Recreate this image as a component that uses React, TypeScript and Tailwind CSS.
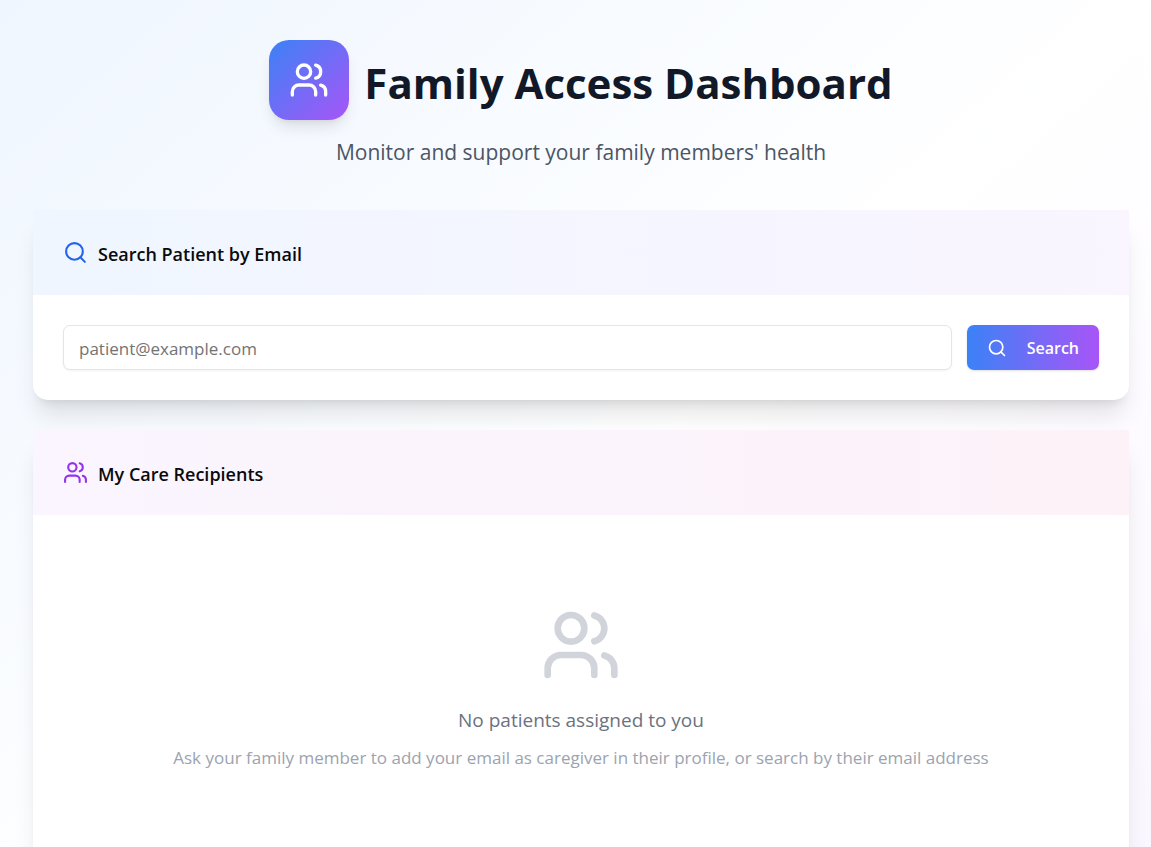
import {useState} from "react";
import {Search, Users} from "lucide-react";

const FamilyDashboard = () => {
  const [email, setEmail] = useState<string>("");

  const handleSubmit = (e: any) => {
    e.preventDefault();
  };

  return (
    <div className="min-h-screen bg-linear-to-br/srgb from-[#eff6ff] via-white to-[#faf5ff] pt-10 pr-[22px] pb-[160px] pl-[33px] font-['Segoe_UI','Open_Sans',sans-serif]">
      <header className="mb-10 text-center">
        <div className="flex items-start justify-center gap-[15px]">
          <div className="rounded-[20px] bg-linear-to-br/srgb from-[#3b82f6] to-[#a855f7] p-5 shadow-lg">
            <Users className="size-10 text-white" />
          </div>
          <h1 className="text-[42px] leading-[85px] font-bold text-[#111827]">
            Family Access Dashboard
          </h1>
        </div>
        <p className="mt-[10px] text-[21px] leading-[35px] text-[#4b5563]">
          Monitor and support your family members' health
        </p>
      </header>

      <main className="flex flex-col gap-[30px]">
        <section className="rounded-[15px] bg-white shadow-xl">
          <div className="bg-linear-to-r/srgb from-[#eff6ff] to-[#faf5ff] px-[30px] pt-[30px] pb-[26px]">
            <h2 className="flex items-start gap-[10px] text-[18px] leading-[29px] font-semibold text-neutral-950">
              <Search className="size-[25px] text-[#2563eb]" />
              Search Patient by Email
            </h2>
          </div>
          <form className="flex gap-[15px] p-[30px]" onSubmit={handleSubmit}>
            <input
              type="email"
              aria-label="Patient email"
              placeholder="patient@example.com"
              className="h-[45px] min-w-0 flex-1 rounded-[7px] border border-neutral-200 bg-white px-[15px] pt-[2px] text-[17px] shadow-xs placeholder:text-neutral-500"
              value={email}
              onChange={(e) => setEmail(e.target.value)}
            />
            <button
              type="submit"
              className="flex h-[45px] items-center gap-5 rounded-[7px] bg-linear-to-r/srgb from-[#3b82f6] to-[#a855f7] px-5 text-[16px] font-semibold text-white shadow-sm">
              <Search className="size-5" />
              Search
            </button>
          </form>
        </section>

        <section className="rounded-[15px] bg-white shadow-xl">
          <div className="bg-linear-to-r/srgb from-[#faf5ff] to-[#fdf2f8] px-[30px] pt-[30px] pb-[26px]">
            <h2 className="flex items-start gap-[10px] text-[18px] leading-[29px] font-semibold text-neutral-950">
              <Users className="size-[25px] text-[#9333ea]" />
              My Care Recipients
            </h2>
          </div>
          <div className="flex flex-col items-center px-[30px] py-[90px] text-center">
            <Users className="mb-5 size-20 text-[#d1d5db]" />
            <p className="text-[19px] leading-[30px] text-[#6b7280]">
              No patients assigned to you
            </p>
            <p className="mt-[10px] text-[17px] leading-[25px] text-[#9ca3af]">
              Ask your family member to add your email as caregiver in their
              profile, or search by their email address
            </p>
          </div>
        </section>
      </main>
    </div>
  );
};

export default FamilyDashboard;
